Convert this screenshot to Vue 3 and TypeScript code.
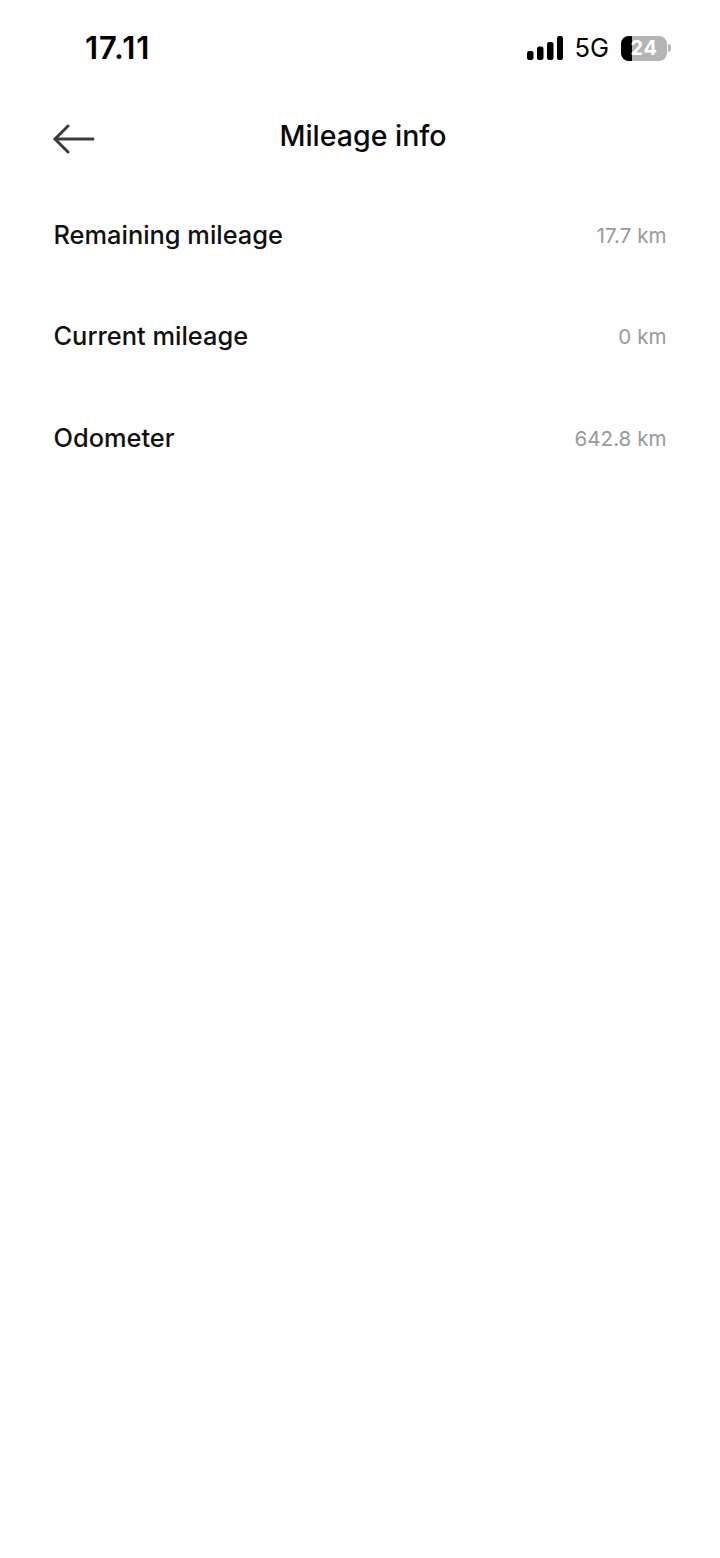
<script setup lang="ts">
const rows: { label: string; value: string }[] = [
  { label: 'Remaining mileage', value: '17.7 km' },
  { label: 'Current mileage', value: '0 km' },
  { label: 'Odometer', value: '642.8 km' },
]
</script>

<template>
  <div class="page">
    <div class="status">
      <span class="time">17.11</span>
      <div class="status-right">
        <svg class="signal" width="36" height="24" viewBox="0 0 36 24" fill="#000">
          <rect x="0" y="15" width="6.5" height="9" rx="2.2" />
          <rect x="10" y="10.5" width="6.5" height="13.5" rx="2.2" />
          <rect x="20" y="6" width="6.5" height="18" rx="2.2" />
          <rect x="30" y="0" width="6" height="24" rx="2.2" />
        </svg>
        <span class="net">5G</span>
        <div class="battery">
          <div class="battery-body">
            <div class="battery-fill"></div>
            <span class="battery-num">24</span>
          </div>
          <div class="battery-tip"></div>
        </div>
      </div>
    </div>

    <div class="header">
      <svg class="back" width="42" height="30" viewBox="0 0 42 30" fill="none" stroke="#3c3c3c" stroke-width="3" stroke-linecap="round" stroke-linejoin="round">
        <path d="M40 15H2" />
        <path d="M15 2L2 15L15 28" />
      </svg>
      <span class="title">Mileage info</span>
    </div>

    <div class="list">
      <div v-for="row in rows" :key="row.label" class="row">
        <span class="label">{{ row.label }}</span>
        <span class="value">{{ row.value }}</span>
      </div>
    </div>
  </div>
</template>

<style>
html, body { margin: 0; background: #fefefe; }
</style>

<style scoped>
.page {
  width: 720px;
  height: 1558px;
  background: #fefefe;
  font-family: Inter, "Liberation Sans", sans-serif;
  color: #0a0a0a;
  overflow: hidden;
}
.status {
  height: 96px;
  display: flex;
  justify-content: space-between;
  align-items: flex-start;
  padding: 29px 49px 0 85px;
  box-sizing: border-box;
}
.time {
  font-size: 31px;
  font-weight: 600;
  line-height: 38px;
  letter-spacing: 1px;
  color: #000;
}
.status-right {
  display: flex;
  align-items: center;
  margin-top: 6px;
  height: 26px;
}
.signal {
  margin-top: -1px;
}
.net {
  font-size: 25.5px;
  font-weight: 400;
  margin-left: 11px;
  line-height: 26px;
  color: #000;
}
.battery {
  display: flex;
  align-items: center;
  margin-left: 12px;
}
.battery-body {
  position: relative;
  width: 46px;
  height: 25px;
  border-radius: 8px;
  background: #b4b4b4;
  overflow: hidden;
  display: flex;
  align-items: center;
  justify-content: center;
}
.battery-fill {
  position: absolute;
  left: 0;
  top: 0;
  bottom: 0;
  width: 11px;
  background: #000;
}
.battery-num {
  position: relative;
  font-size: 20px;
  font-weight: 700;
  color: #fff;
  line-height: 25px;
  letter-spacing: 0.5px;
}
.battery-tip {
  width: 3px;
  height: 8px;
  margin-left: 1px;
  border-radius: 0 3px 3px 0;
  background: #b4b4b4;
}
.header {
  position: relative;
  height: 82px;
  display: flex;
  align-items: center;
  justify-content: center;
}
.back {
  position: absolute;
  left: 53px;
  top: 28px;
}
.title {
  font-size: 28.5px;
  font-weight: 500;
  margin-left: 6px;
  margin-top: -3px;
  color: #0a0a0a;
}
.list {
  padding: 5.5px 53.5px 0;
  display: flex;
  flex-direction: column;
}
.row {
  height: 101.5px;
  display: flex;
  align-items: center;
  justify-content: space-between;
}
.label {
  font-size: 25.4px;
  font-weight: 500;
  color: #111;
}
.value {
  font-size: 20.6px;
  font-weight: 400;
  color: #9a9a9a;
  margin-top: 2px;
}
</style>
